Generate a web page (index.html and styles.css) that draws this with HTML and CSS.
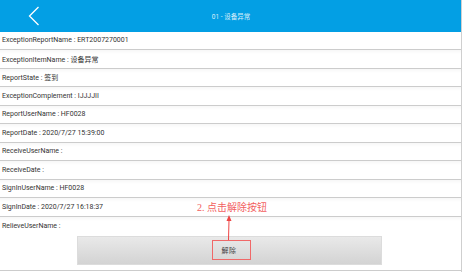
FILE: index.html
```html
<!DOCTYPE html>
<html>
<head>
  <meta charset="UTF-8">
  <title>01 - 设备异常</title>
  <link rel="stylesheet" href="styles.css">
</head>
<body>
  <div class="page_main">

    <div class="top_bar">
      <div class="back_btn">
        <svg width="12" height="20" viewBox="0 0 12 20">
          <polyline points="10.5,1 1.5,10 10.5,19" fill="none" stroke="#fff" stroke-width="1.3" />
        </svg>
      </div>
      <div class="top_title">01 - 设备异常</div>
    </div>

    <div class="info_list">
      <div class="info_row">ExceptionReportName : ERT2007270001</div>
      <div class="info_row">ExceptionItemName : 设备异常</div>
      <div class="info_row">ReportState : 签到</div>
      <div class="info_row">ExceptionComplement : IJJJJII</div>
      <div class="info_row">ReportUserName : HF0028</div>
      <div class="info_row">ReportDate : 2020/7/27 15:39:00</div>
      <div class="info_row">ReceiveUserName :</div>
      <div class="info_row">ReceiveDate :</div>
      <div class="info_row">SignInUserName : HF0028</div>
      <div class="info_row">SignInDate : 2020/7/27 16:18:37</div>
      <div class="info_row last_row">
        <div class="row_label">RelieveUserName :</div>
        <div class="btn_wrap">
          <div class="relieve_btn">解除</div>
        </div>
      </div>
    </div>

    <!-- annotation -->
    <div class="tip_text">2. 点击解除按钮</div>
    <svg class="tip_arrow" width="10" height="26" viewBox="0 0 10 26">
      <line x1="5" y1="5" x2="4.5" y2="25" stroke="#ee4444" stroke-width="1" />
      <polygon points="5,0 2.5,6 7.5,6" fill="#ee4444" />
    </svg>
    <div class="tip_box"></div>

  </div>
</body>
</html>
```

FILE: styles.css
```css
html,
body {
  width: 100%;
  height: 100%;
  margin: 0;
  padding: 0;
  overflow: hidden;
  background-color: white;
}

.page_main {
  position: relative;
  width: 462px;
  height: 272px;
  border-right: 1px solid #cfcfcf;
  box-sizing: border-box;
  font-family: Roboto, "Noto Sans CJK SC", sans-serif;
}

.top_bar {
  height: 31.5px;
  background-color: #039fe4;
  display: grid;
  grid-template-columns: 60px auto 60px;
  align-items: center;
}

.back_btn {
  display: grid;
  justify-content: end;
  padding-right: 20px;
  padding-top: 1px;
}

.back_btn svg {
  display: block;
}

.top_title {
  text-align: center;
  color: rgba(255, 255, 255, 0.85);
  font-size: 6.5px;
  padding-left: 1px;
}

.info_list {
  display: flex;
  flex-direction: column;
}

.info_row {
  height: 18.5px;
  padding-left: 2px;
  border-bottom: 1px solid #cccccc;
  box-sizing: border-box;
  display: flex;
  align-items: center;
  font-size: 7px;
  color: #333333;
  background: linear-gradient(to bottom, #f7f7f7, #ffffff 4px);
}

.info_row:first-child {
  background: white;
}

.info_row.last_row {
  height: 54px;
  flex-direction: column;
  align-items: stretch;
  padding-left: 0;
}

.row_label {
  height: 19px;
  padding-left: 2px;
  display: flex;
  align-items: center;
}

.btn_wrap {
  display: flex;
  justify-content: center;
  padding-right: 3px;
}

.relieve_btn {
  width: 305px;
  height: 29px;
  box-sizing: border-box;
  border: 1px solid #dcdcdc;
  background: linear-gradient(to bottom, #e9e9e9, #d3d3d3);
  display: grid;
  place-content: center;
  color: #444444;
  font-size: 7px;
  letter-spacing: 0.5px;
}

.tip_text {
  position: absolute;
  left: 197px;
  top: 199px;
  color: #f26060;
  font-family: "Liberation Serif", "Noto Sans CJK SC", serif;
  font-size: 10px;
}

.tip_arrow {
  position: absolute;
  left: 224px;
  top: 215px;
}

.tip_box {
  position: absolute;
  left: 212px;
  top: 240px;
  width: 39px;
  height: 20px;
  box-sizing: border-box;
  border: 1.5px solid #f06868;
}
```
